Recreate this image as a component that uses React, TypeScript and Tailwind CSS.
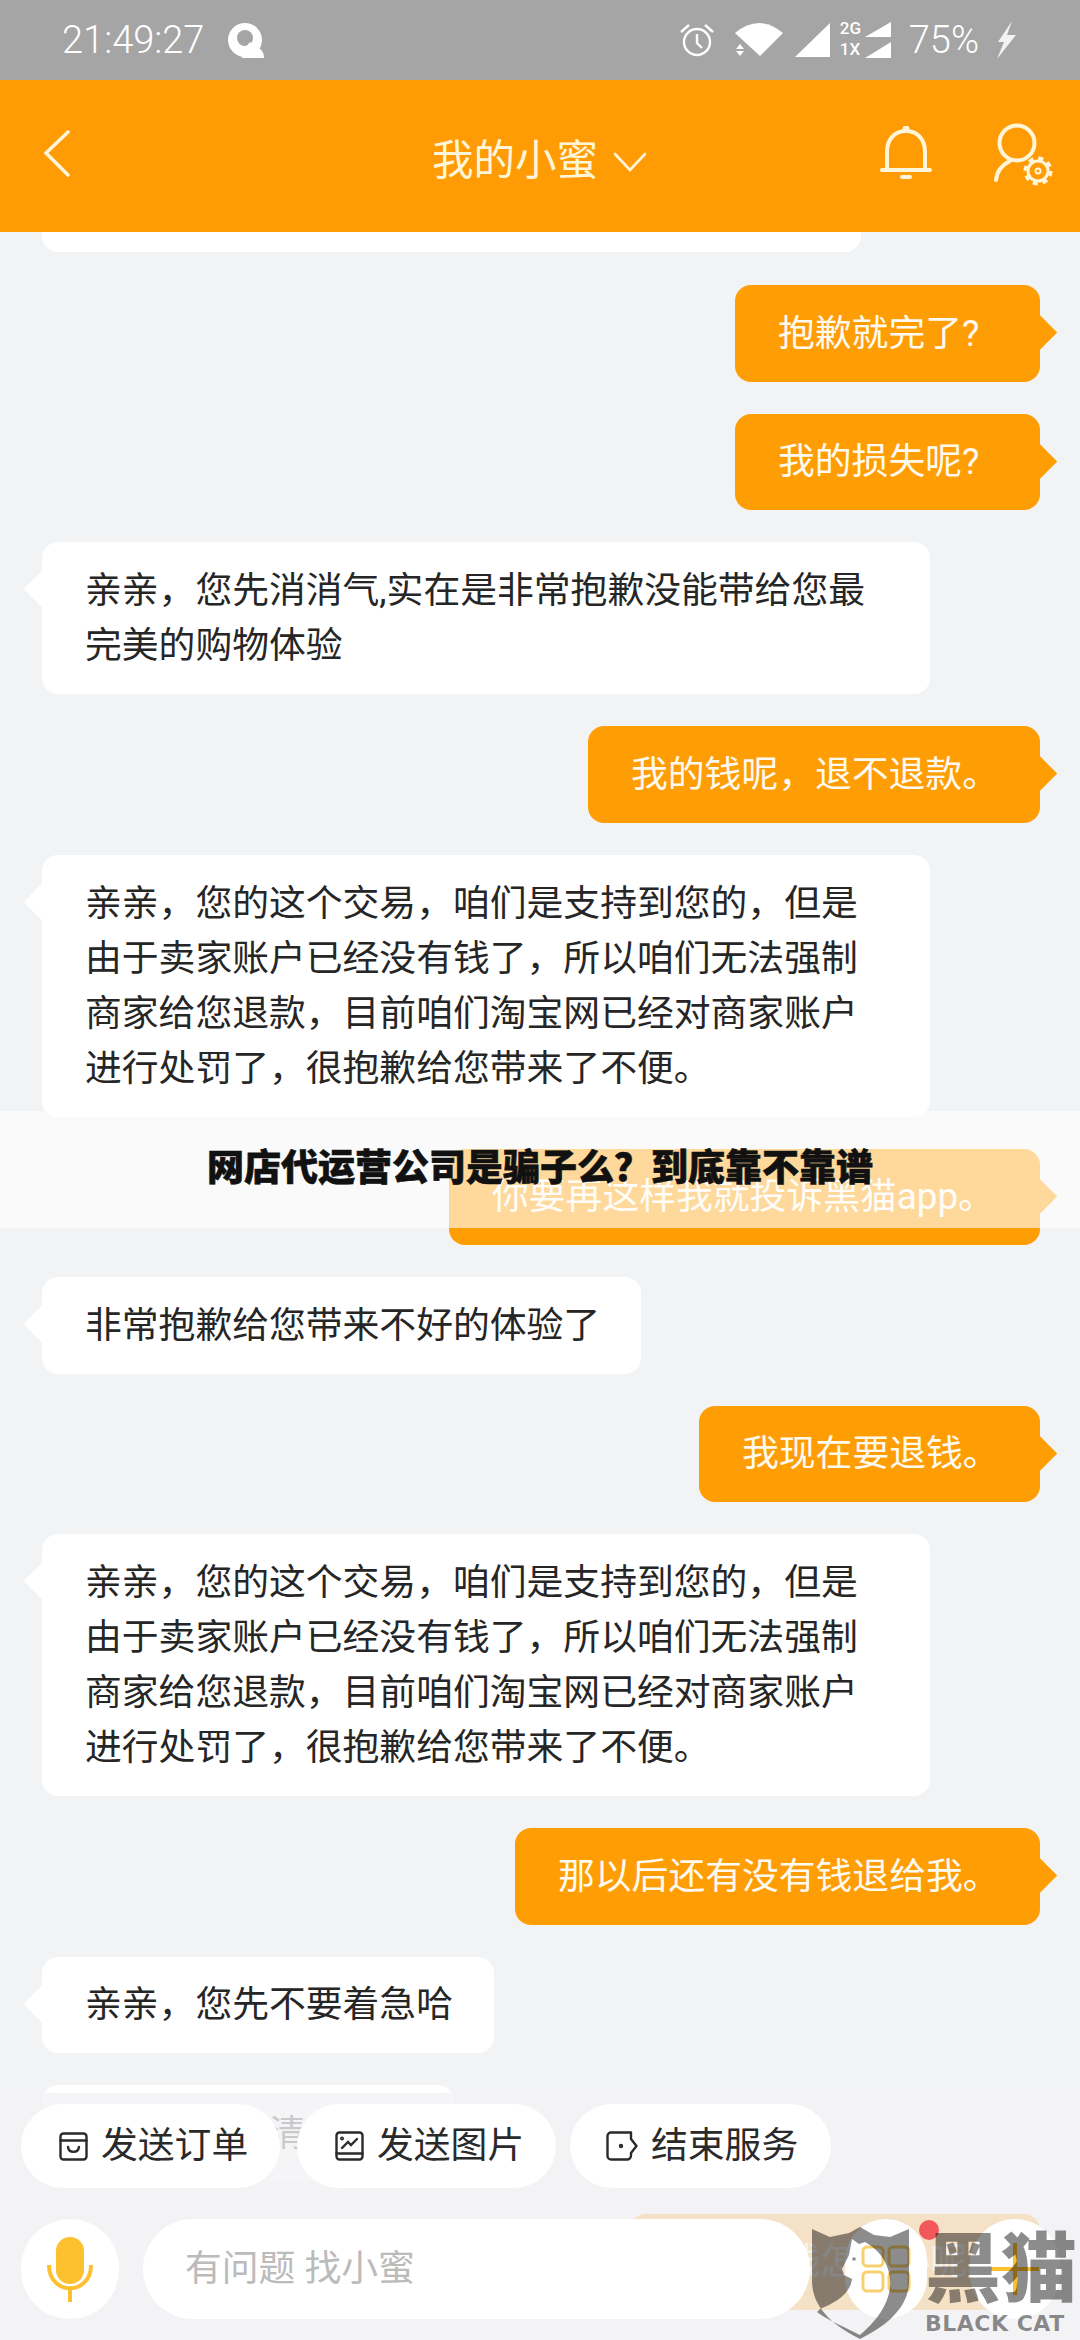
const cjk = "font-['Roboto','Noto_Sans_CJK_SC',sans-serif]";

function Right({ children, className }: { children: React.ReactNode; className?: string }) {
  return (
    <div className="flex justify-end pr-10">
      <div className={`relative h-[96.5px] shrink-0 flex items-center whitespace-nowrap rounded-[16px] bg-[#ff9d05] pl-[43px] text-[36.8px] text-[#fffaf0] ${className ?? ''}`}>
        <div className="absolute right-[-12px] top-[35px] w-[25px] h-[25px] rotate-45 bg-[#ff9d05]" />
        <span className="relative">{children}</span>
      </div>
    </div>
  );
}

function Left({ children, className }: { children: React.ReactNode; className?: string }) {
  return (
    <div className="flex pl-[42px]">
      <div className={`relative shrink-0 flex items-center whitespace-nowrap rounded-[16px] bg-white pl-[43px] text-[36.8px] leading-[55px] text-[#262626] ${className ?? ''}`}>
        <div className="absolute left-[-13px] top-[34px] w-[26px] h-[26px] rotate-45 bg-white" />
        <div className="relative">{children}</div>
      </div>
    </div>
  );
}

function Chip({ icon, label, className }: { icon: React.ReactNode; label: string; className?: string }) {
  return (
    <div className={`h-[84px] flex items-center gap-[13px] rounded-[42px] bg-white text-[36.8px] text-[#2a2a2a] ${className ?? ''}`}>
      {icon}
      <span>{label}</span>
    </div>
  );
}

export default function App() {
  return (
    <div className={`relative w-[1080px] h-[2340px] overflow-hidden flex flex-col bg-[#f2f3f5] ${cjk}`}>
      {/* status bar */}
      <div className="h-[80px] shrink-0 flex items-center justify-between bg-[#a5a5a5] pl-[62px] pr-[63px] text-white">
        <div className="flex items-center gap-[24px]">
          <span className="text-[38px] font-light">21:49:27</span>
          <svg width="36" height="35" viewBox="0 0 36 35">
            <circle cx="17" cy="17" r="17" fill="white" />
            <circle cx="17" cy="15" r="8" fill="#a5a5a5" />
            <path d="M14 35 L15 27 L22 19 L28 25 C34 25 36 30 36 35 Z" fill="white" />
          </svg>
        </div>
        <div className="flex items-center">
          <svg width="36" height="34" viewBox="0 0 36 34" fill="none" stroke="white" strokeWidth="2.4">
            <circle cx="18" cy="19" r="13" />
            <path d="M18 11 V20 L23 25 M2 9 L10 2 M34 9 L26 2" />
          </svg>
          <svg className="ml-[20px]" width="48" height="34" viewBox="0 0 48 34" fill="white">
            <path d="M0 10 Q24 -10 48 10 L25 33 Z" />
            <path d="M1 26 L5 21 L9 26 Z M1 28 L9 28 L5 33 Z" />
          </svg>
          <svg className="ml-[12px]" width="35" height="34" viewBox="0 0 35 34" fill="white"><path d="M0 34 L35 0 V34 Z" /></svg>
          <div className="relative ml-[10px] w-[51px] h-[36px]">
            <span className="absolute left-0 top-[-2px] text-[17px] leading-[17px] font-medium">2G</span>
            <span className="absolute left-0 top-[19px] text-[17px] leading-[17px] font-medium">1X</span>
            <svg className="absolute right-0 top-0" width="26" height="36" viewBox="0 0 26 36" fill="white">
              <path d="M0 15 L26 0 V15 Z M0 36 L26 20 V36 Z" />
            </svg>
          </div>
          <span className="ml-[18px] text-[38px] font-light">75%</span>
          <svg className="ml-[14px]" width="24" height="38" viewBox="0 0 24 38" fill="white" fillOpacity="0.85"><path d="M19 0 L5 21 H11 L4 38 L23 14 H14 Z" /></svg>
        </div>
      </div>

      {/* header */}
      <div className="h-[152px] shrink-0 flex items-center bg-[#ff9c05] pl-[44px] pr-[27px] text-[#fff6da]">
        <svg className="mt-[-6px]" width="26" height="47" viewBox="0 0 26 47" fill="none" stroke="currentColor" strokeWidth="3.5" strokeLinecap="round">
          <path d="M24 2 L2 23 L24 45" />
        </svg>
        <div className="ml-[362px] flex items-center gap-[15px] mt-[10px]">
          <span className="text-[41.5px]">我的小蜜</span>
          <svg className="mt-[2px]" width="34" height="20" viewBox="0 0 34 20" fill="none" stroke="currentColor" strokeWidth="2.6" strokeLinecap="round">
            <path d="M2 2 L17 18 L32 2" />
          </svg>
        </div>
        <div className="ml-auto flex items-center gap-[61px] mt-[-6px]">
          <svg width="52" height="54" viewBox="0 0 52 54" fill="none" stroke="currentColor" strokeWidth="4" strokeLinecap="round">
            <path d="M7 43 V26 C7 13 15 5 26 5 C37 5 45 13 45 26 V43" />
            <path d="M2 44 H50" />
            <path d="M22 51 H30" />
            <circle cx="26" cy="3" r="1.5" />
          </svg>
          <svg width="60" height="66" viewBox="0 0 60 66" fill="none" stroke="currentColor" strokeWidth="4" strokeLinecap="round">
            <circle cx="24" cy="23" r="17.5" />
            <path d="M3 60 C4 50 9 45 17 41" />
            <circle cx="45" cy="51" r="10" strokeWidth="3" />
            <circle cx="45" cy="51" r="12.5" strokeWidth="4" strokeLinecap="butt" strokeDasharray="5 4.8" />
            <circle cx="45" cy="51" r="2.5" strokeWidth="2" />
          </svg>
        </div>
      </div>

      {/* chat */}
      <div className="flex flex-col gap-[32px]">
        <div className="ml-[42px] mb-[1px] w-[819px] h-[20px] rounded-b-[16px] bg-white" />
        <Right className="w-[305px]">抱歉就完了?</Right>
        <Right className="w-[305px]">我的损失呢?</Right>
        <Left className="w-[888px] h-[152px]">亲亲&#65292;您先消消气,实在是非常抱歉没能带给您最<br />完美的购物体验</Left>
        <Right className="w-[452px]">我的钱呢&#65292;退不退款。</Right>
        <Left className="w-[888px] h-[262px]">亲亲&#65292;您的这个交易&#65292;咱们是支持到您的&#65292;但是<br />由于卖家账户已经没有钱了&#65292;所以咱们无法强制<br />商家给您退款&#65292;目前咱们淘宝网已经对商家账户<br />进行处罚了&#65292;很抱歉给您带来了不便。</Left>
        <Right className="w-[591px]">你要再这样我就投诉黑猫app。</Right>
        <Left className="w-[599px] h-[96.5px]">非常抱歉给您带来不好的体验了</Left>
        <Right className="w-[341px]">我现在要退钱。</Right>
        <Left className="w-[888px] h-[262px]">亲亲&#65292;您的这个交易&#65292;咱们是支持到您的&#65292;但是<br />由于卖家账户已经没有钱了&#65292;所以咱们无法强制<br />商家给您退款&#65292;目前咱们淘宝网已经对商家账户<br />进行处罚了&#65292;很抱歉给您带来了不便。</Left>
        <Right className="w-[525px]">那以后还有没有钱退给我。</Right>
        <Left className="w-[452px] h-[96.5px]">亲亲&#65292;您先不要着急哈</Left>
        <Left className="w-[412px] h-[96.5px]">亲亲&#65292;您说清楚哈</Left>
        <Right className="w-[410px]">那我的钱怎么办呢。</Right>
      </div>

      {/* title banner */}
      <div className="absolute left-0 right-0 top-[1111px] h-[117px] flex items-center justify-center bg-white/60">
        <span className="text-[37px] font-black text-[#111111] [-webkit-text-stroke:0.6px_#111111] mt-[-2px]">网店代运营公司是骗子么&#65311;到底靠不靠谱</span>
      </div>

      {/* bottom bar */}
      <div className="absolute left-0 right-0 bottom-0 h-[247px] bg-[#f2f3f5]/80 pt-[11px] pl-[21px]">
        <div className="flex gap-[14px]">
          <Chip
            className="w-[259px] pl-[38px]"
            label="发送订单"
            icon={
              <svg width="29" height="29" viewBox="0 0 29 29" fill="none" stroke="#2a2a2a" strokeWidth="2.4" strokeLinecap="round">
                <rect x="1.5" y="1.5" width="26" height="26" rx="3" />
                <path d="M1.5 8.5 H27.5 M9 15 C10 21.5 19 21.5 20 15" />
              </svg>
            }
          />
          <Chip
            className="ml-[3px] w-[259px] pl-[38px]"
            label="发送图片"
            icon={
              <svg width="29" height="30" viewBox="0 0 29 30" fill="none" stroke="#2a2a2a" strokeWidth="2.4" strokeLinecap="round">
                <rect x="1.5" y="1.5" width="26" height="27" rx="3" />
                <path d="M1.5 22.5 H27.5 M7 17 L13 11 L16 14 L22 8" />
                <circle cx="7" cy="7.5" r="0.8" />
              </svg>
            }
          />
          <Chip
            className="w-[261px] pl-[36px]"
            label="结束服务"
            icon={
              <svg width="32" height="30" viewBox="0 0 32 30" fill="none" stroke="#2a2a2a" strokeWidth="2.4" strokeLinecap="round" strokeLinejoin="round">
                <path d="M25 8 V1.5 H5 A3.5 3.5 0 0 0 1.5 5 V25 A3.5 3.5 0 0 0 5 28.5 H21 A4 4 0 0 0 25 24.5 V22 L30.5 15 L25 8" />
                <circle cx="15" cy="15" r="1" />
              </svg>
            }
          />
        </div>
        <div className="mt-[31px] flex items-center gap-[24px]">
          <div className="w-[98px] h-[100px] flex items-center justify-center rounded-full bg-white">
            <svg width="46" height="65" viewBox="0 0 46 65" fill="none">
              <rect x="9" y="0" width="28" height="47" rx="14" fill="#fdc02f" />
              <path d="M2 28 C2 59 44 59 44 28" stroke="#fdc02f" strokeWidth="4" />
              <path d="M23 52 V65" stroke="#fdc02f" strokeWidth="4" />
            </svg>
          </div>
          <div className="w-[667px] h-[100px] flex items-center rounded-full bg-white pl-[42px] text-[36.8px] text-[#bbbbbb]">
            有问题 找小蜜
          </div>
          <div className="ml-[11px] w-[82px] h-[100px] flex items-center justify-center rounded-full bg-white">
            <svg width="50" height="48" viewBox="0 0 50 48" fill="none" stroke="#f7d070" strokeWidth="3">
              <rect x="2" y="2" width="20" height="19" rx="4" />
              <rect x="28" y="2" width="20" height="19" rx="4" />
              <rect x="2" y="27" width="20" height="19" rx="4" />
              <rect x="28" y="27" width="20" height="19" rx="4" />
            </svg>
          </div>
          <div className="ml-[19px] w-[90px] h-[100px] flex items-center justify-center rounded-full bg-white">
            <svg width="48" height="52" viewBox="0 0 48 52" fill="none" stroke="#fdc02f" strokeWidth="4">
              <path d="M0 26 H48 M24 0 V52" />
            </svg>
          </div>
        </div>
      </div>

      {/* watermark */}
      <svg className="absolute left-[812px] top-[2227px]" width="97" height="112" viewBox="0 0 97 112">
        <path
          fill="black"
          fillOpacity="0.45"
          fillRule="evenodd"
          d="M0 2 L18 10 L37 6 L48 0 L62 8 L78 10 L97 2 V54 C97 82 72 100 48 112 C24 100 0 82 0 54 Z M40 12 L47 17 L53 15 C70 24 80 42 78 60 C76 80 62 96 48 108 C32 100 14 92 5 85 L8 82 C22 76 38 68 40 52 L32 48 L30 42 L37 28 Z"
        />
        <circle cx="42" cy="32" r="1.8" fill="black" fillOpacity="0.45" />
      </svg>
      <div className="absolute left-[919px] top-[2220px] w-[20px] h-[20px] rounded-full bg-[#f2575c]" />
      <span className="absolute left-[925px] top-[2226px] text-[76px] leading-[88px] font-black text-black/45 whitespace-nowrap">黑猫</span>
      <span className="absolute left-[925px] top-[2311px] text-[22px] leading-[26px] font-bold tracking-[0.5px] text-black/45 whitespace-nowrap font-['DejaVu_Sans',sans-serif]">BLACK CAT</span>
    </div>
  );
}
